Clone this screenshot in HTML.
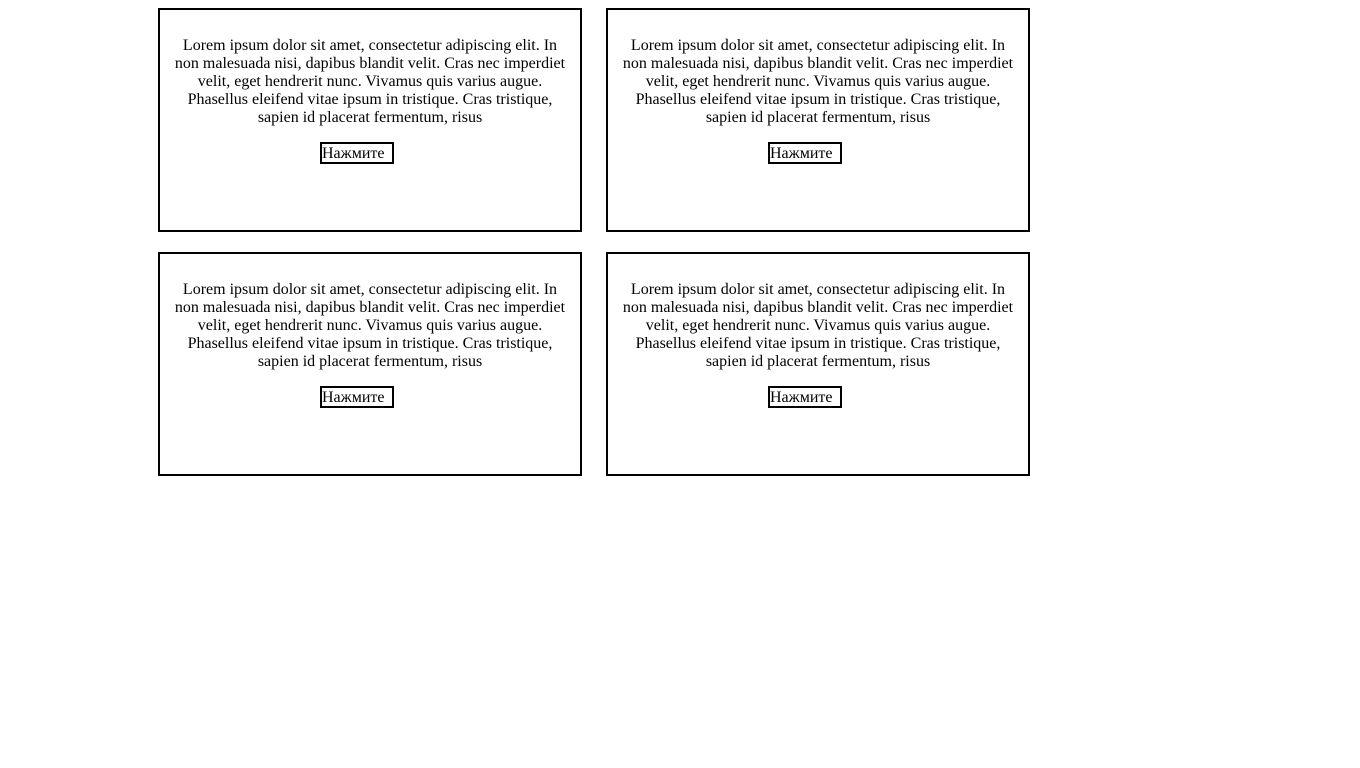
<!DOCTYPE html>
<html><head><meta charset="utf-8"><style>
html,body{margin:0;padding:0;background:#fff;}
body{font-family:"Liberation Serif",serif;font-size:16px;line-height:18px;color:#000;}
.wrap{position:relative;}
.box{position:absolute;width:400px;height:200px;padding:10px;border:2px solid #000;text-align:center;}
.box p{margin:17px 0 15px;}
.bw{text-align:left;}
.btn{display:inline-block;margin-left:150px;box-sizing:border-box;width:74px;border:2px solid #000;padding:1px 0 0 0;height:22px;line-height:18px;font-family:"Liberation Serif",serif;font-size:16px;}
</style></head><body><div class="wrap">
<div class="box" style="left:158px;top:8px"><p>Lorem ipsum dolor sit amet, consectetur adipiscing elit. In non malesuada nisi, dapibus blandit velit. Cras nec imperdiet velit, eget hendrerit nunc. Vivamus quis varius augue. Phasellus eleifend vitae ipsum in tristique. Cras tristique, sapien id placerat fermentum, risus</p><div class="bw"><span class="btn">Нажмите</span></div></div>
<div class="box" style="left:606px;top:8px"><p>Lorem ipsum dolor sit amet, consectetur adipiscing elit. In non malesuada nisi, dapibus blandit velit. Cras nec imperdiet velit, eget hendrerit nunc. Vivamus quis varius augue. Phasellus eleifend vitae ipsum in tristique. Cras tristique, sapien id placerat fermentum, risus</p><div class="bw"><span class="btn">Нажмите</span></div></div>
<div class="box" style="left:158px;top:252px"><p>Lorem ipsum dolor sit amet, consectetur adipiscing elit. In non malesuada nisi, dapibus blandit velit. Cras nec imperdiet velit, eget hendrerit nunc. Vivamus quis varius augue. Phasellus eleifend vitae ipsum in tristique. Cras tristique, sapien id placerat fermentum, risus</p><div class="bw"><span class="btn">Нажмите</span></div></div>
<div class="box" style="left:606px;top:252px"><p>Lorem ipsum dolor sit amet, consectetur adipiscing elit. In non malesuada nisi, dapibus blandit velit. Cras nec imperdiet velit, eget hendrerit nunc. Vivamus quis varius augue. Phasellus eleifend vitae ipsum in tristique. Cras tristique, sapien id placerat fermentum, risus</p><div class="bw"><span class="btn">Нажмите</span></div></div>
</div></body></html>
